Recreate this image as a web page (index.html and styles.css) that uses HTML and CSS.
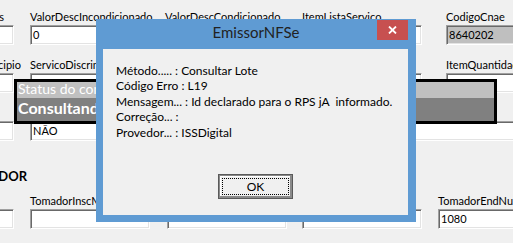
FILE: index.html
```html
<!DOCTYPE html>
<html lang="pt">
<head>
<meta charset="utf-8">
<title>EmissorNFSe</title>
<link rel="stylesheet" href="styles.css">
</head>
<body>
<div class="form">
  <div class="row">
    <div class="field"><div class="lbl end e1">ValorDeducoes</div><div class="inp"></div></div>
    <div class="field"><div class="lbl">ValorDescIncondicionado</div><div class="inp">0</div></div>
    <div class="field"><div class="lbl">ValorDescCondicionado</div><div class="inp"></div></div>
    <div class="field"><div class="lbl">ItemListaServico</div><div class="inp"></div></div>
    <div class="field"><div class="lbl">CodigoCnae</div><div class="inp ro">8640202</div></div>
  </div>
  <div class="row">
    <div class="field"><div class="lbl end e2">CodigoMunicipio</div><div class="inp"></div></div>
    <div class="field"><div class="lbl">ServicoDiscriminacao</div><div class="inp"></div></div>
    <div class="field"><div class="lbl">ItemDescricao</div><div class="inp"></div></div>
    <div class="field"><div class="lbl">ItemValor</div><div class="inp"></div></div>
    <div class="field"><div class="lbl">ItemQuantidade</div><div class="inp"></div></div>
  </div>
  <div class="row">
    <div class="field"><div class="lbl"></div><div class="inp"></div></div>
    <div class="field span"><div class="lbl">ItemTributavel</div><div class="inp wide">NÃO</div></div>
  </div>
  <div class="group">TOMADOR</div>
  <div class="row row5">
    <div class="field"><div class="lbl"></div><div class="inp"></div></div>
    <div class="field"><div class="lbl">TomadorInscMunicipal</div><div class="inp"></div></div>
    <div class="field"><div class="lbl">TomadorRazaoSocial</div><div class="inp"></div></div>
    <div class="field"><div class="lbl">TomadorEndereco</div><div class="inp"></div></div>
    <div class="field"><div class="lbl">TomadorEndNumero</div><div class="inp">1080</div></div>
  </div>
</div>

<div class="status">
  <div class="status-top">Status do comunicação</div>
  <div class="status-main">Consultando</div>
</div>

<div class="dialog">
  <div class="titlebar">
    <span class="title">EmissorNFSe</span>
    <button class="close" type="button" aria-label="Fechar">
      <svg width="9" height="8" viewBox="0 0 9 8"><path d="M1 0.5L8 7.5M8 0.5L1 7.5" stroke="#fff" stroke-width="1.8" fill="none"/></svg>
    </button>
  </div>
  <div class="client">
    <div class="msg"><div>Método..... : Consultar Lote</div><div>Código Erro : L19</div><div>Mensagem... : Id declarado para o RPS jA  informado.</div><div>Correção... :</div><div>Provedor... : ISSDigital</div></div>
    <button class="ok" type="button"><span class="focus">OK</span></button>
  </div>
</div>
</body>
</html>
```
FILE: styles.css
```css
* { box-sizing: border-box; }
html, body { margin: 0; padding: 0; }
body {
  width: 513px;
  height: 243px;
  overflow: hidden;
  position: relative;
  background: #f0f0f0;
  font-family: Lato, "Open Sans", sans-serif;
  color: #000;
}

.form {
  margin-left: -106px;
  padding-top: 10px;
  display: flex;
  flex-direction: column;
}
.row {
  display: grid;
  grid-template-columns: 136px 135px 137px 144px 140px;
}
.row + .row { margin-top: 13px; }
.row5 { grid-template-columns: 136px 137px 135px 136px 140px; }
.field { display: flex; flex-direction: column; }
.field.span { grid-column: 2 / -1; }
.lbl {
  font-size: 11px;
  line-height: 13px;
  height: 13px;
  margin-bottom: 2px;
  white-space: nowrap;
}
.lbl.end { text-align: right; }
.lbl.e1 { width: 110px; }
.lbl.e2 { width: 127px; }
.inp {
  width: 120px;
  height: 20px;
  background: #fff;
  border: 1px solid;
  border-color: #a0a0a0 #fff #fff #a0a0a0;
  box-shadow: inset 1px 1px 0 #696969, inset -1px -1px 0 #e3e3e3;
  font-size: 11px;
  line-height: 18px;
  padding-left: 2px;
  white-space: nowrap;
  overflow: hidden;
}
.inp.ro { background: #bfbfbf; }
.inp.wide { width: 600px; }

.group {
  margin-top: 27px;
  width: 133px;
  text-align: right;
  white-space: nowrap;
  font-weight: 700;
  font-size: 13px;
  line-height: 16px;
  height: 16px;
}
.group + .row { margin-top: 10px; }

.status {
  position: absolute;
  left: 14px;
  top: 79px;
  width: 483px;
  height: 45px;
  border: 3px solid #000;
  display: flex;
  flex-direction: column;
  overflow: hidden;
}
.status-top {
  height: 16px;
  background: #c0c0c0;
  color: #fff;
  font-size: 14px;
  line-height: 13px;
  padding-left: 1px;
  white-space: nowrap;
}
.status-main {
  flex: 1;
  background: #808080;
  color: #fff;
  font-weight: 700;
  font-size: 16px;
  line-height: 20px;
  padding-left: 1px;
  white-space: nowrap;
}

.dialog {
  position: absolute;
  left: 96px;
  top: 19px;
  width: 320px;
  height: 203px;
  background: #5f9bd3;
  display: flex;
  flex-direction: column;
}
.titlebar {
  height: 30px;
  display: grid;
  grid-template-columns: 1fr auto 1fr;
}
.title {
  grid-column: 2;
  align-self: start;
  margin-top: 4px;
  font-size: 15px;
  line-height: 18px;
  color: #222;
}
.close {
  grid-column: 3;
  justify-self: end;
  align-self: start;
  margin: 1px 8px 0 0;
  width: 31px;
  height: 20px;
  background: #c75050;
  border: 0;
  padding: 0;
  display: flex;
  align-items: center;
  justify-content: center;
}
.client {
  flex: 1;
  margin: 0 8px 7px 7px;
  background: #f0f0f0;
  display: flex;
  flex-direction: column;
  padding: 14px 13px 16px;
}
.msg {
  font-size: 12px;
  line-height: 15.4px;
  white-space: pre;
}
.ok {
  margin-top: auto;
  align-self: center;
  width: 75px;
  height: 25px;
  padding: 3px;
  background: #f0f0f0;
  border: 1px solid #5a5a5a;
  box-shadow: inset 1px 1px 0 #8a8a8a, inset -2px -2px 0 #8a8a8a, inset 2px 2px 0 #fff;
  font-family: inherit;
  font-size: 12px;
  color: #000;
  display: flex;
}
.focus {
  flex: 1;
  border: 1px dotted #000;
  display: flex;
  align-items: center;
  justify-content: center;
  line-height: 1;
}
```
